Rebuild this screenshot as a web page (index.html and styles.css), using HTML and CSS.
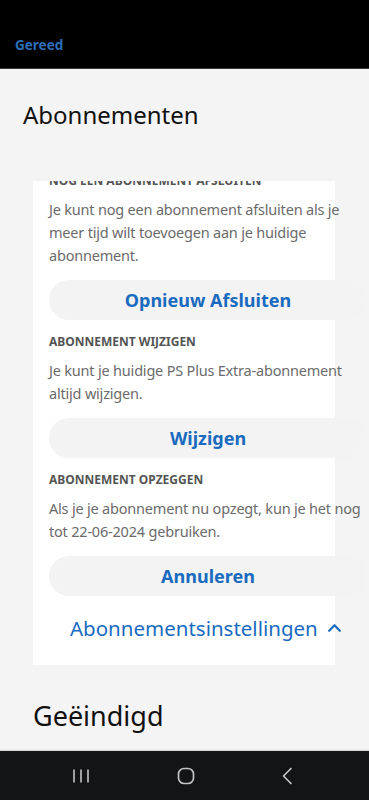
FILE: index.html
```html
<!DOCTYPE html>
<html lang="nl">
<head>
<meta charset="utf-8">
<link rel="stylesheet" href="styles.css">
</head>
<body>
<div class="topbar"><span class="done">Gereed</span></div>
<main class="page">
  <h1 class="title">Abonnementen</h1>
  <div class="scroll">
    <section class="card">
      <div class="inner">
        <h2 class="label first">NOG EEN ABONNEMENT AFSLUITEN</h2>
        <p class="desc">Je kunt nog een abonnement afsluiten als je meer tijd wilt toevoegen aan je huidige abonnement.</p>
        <button class="btn">Opnieuw Afsluiten</button>
        <h2 class="label">ABONNEMENT WIJZIGEN</h2>
        <p class="desc">Je kunt je huidige PS Plus Extra-abonnement altijd wijzigen.</p>
        <button class="btn">Wijzigen</button>
        <h2 class="label">ABONNEMENT OPZEGGEN</h2>
        <p class="desc">Als je je abonnement nu opzegt, kun je het nog tot 22-06-2024 gebruiken.</p>
        <button class="btn">Annuleren</button>
        <div class="settings">
          <span>Abonnementsinstellingen</span>
          <svg class="chev" width="13" height="9" viewBox="0 0 13 9"><path d="M1.2 7.8 L6.5 2.2 L11.8 7.8" fill="none" stroke="#1a6bbf" stroke-width="2.2" stroke-linecap="round" stroke-linejoin="round"/></svg>
        </div>
      </div>
    </section>
    <h2 class="ended">Geëindigd</h2>
  </div>
</main>
<nav class="navbar">
  <svg width="18" height="16" viewBox="0 0 18 16"><path d="M2 1.5v13M9 1.5v13M16 1.5v13" stroke="#c4c4c4" stroke-width="1.6"/></svg>
  <svg width="18" height="18" viewBox="0 0 18 18"><rect x="1.5" y="1.5" width="15" height="15" rx="5.5" fill="none" stroke="#c4c4c4" stroke-width="1.7"/></svg>
  <svg width="12" height="18" viewBox="0 0 12 18"><path d="M10 1.5 L2.5 9 L10 16.5" fill="none" stroke="#c4c4c4" stroke-width="1.7" stroke-linecap="round" stroke-linejoin="round"/></svg>
</nav>
</body>
</html>
```
FILE: styles.css
```css
* { box-sizing: border-box; }
html, body { margin: 0; padding: 0; }
body {
  width: 369px;
  height: 800px;
  overflow: hidden;
  display: flex;
  flex-direction: column;
  font-family: "Noto Sans", "Open Sans", sans-serif;
  background: #f4f4f4;
}
.topbar {
  height: 69px;
  background: #000;
  display: flex;
  align-items: flex-start;
  padding: 35px 0 0 15px;
  border-bottom: 1px solid #3a3a3a;
}
.done {
  color: #2a6fb8;
  font-weight: 700;
  font-size: 13.5px;
  line-height: 20px;
}
.page {
  flex: 1;
  display: flex;
  flex-direction: column;
  min-height: 0;
  background: #f4f4f4;
  border-bottom: 1px solid #e8e8e8;
}
.title {
  margin: 30px 0 0 23px;
  font-weight: 400;
  font-size: 24px;
  line-height: 32px;
  color: #111;
  height: 82px;
}
.scroll {
  flex: 1;
  overflow: hidden;
  min-height: 0;
}
.card {
  margin-left: 33px;
  width: 302px;
  background: #fff;
  padding: 0 0 24px 16px;
}
.inner {
  width: 318px;
  margin-top: -8px;
}
.label {
  margin: 14px 0 0;
  font-size: 12px;
  line-height: 16px;
  font-weight: 700;
  color: #555;
}
.label.first { margin-top: 0; }
.desc {
  margin: 9px 0 0;
  padding-right: 2px;
  font-size: 14.5px;
  letter-spacing: -0.2px;
  line-height: 23px;
  color: #6b6b6b;
}
.btn {
  display: block;
  width: 318px;
  height: 40px;
  margin-top: 13px;
  border: none;
  border-radius: 20px;
  background: #f3f3f3;
  color: #1a6bbf;
  font-family: inherit;
  font-weight: 700;
  font-size: 18px;
  padding: 0;
}
.settings {
  margin-top: 19px;
  display: flex;
  align-items: center;
  padding-left: 21px;
  gap: 10px;
  color: #1a6bbf;
  font-size: 20.5px;
  line-height: 26px;
}
.chev { margin-top: -2px; }
.ended {
  margin: 34px 0 0 33px;
  font-weight: 400;
  font-size: 27px;
  line-height: 34px;
  color: #111;
}
.navbar {
  height: 50px;
  background: #131416;
  display: flex;
  align-items: center;
  justify-content: space-between;
  padding: 0 76px 0 72px;
  border-top: 1px solid #dcdcdc;
}
```
